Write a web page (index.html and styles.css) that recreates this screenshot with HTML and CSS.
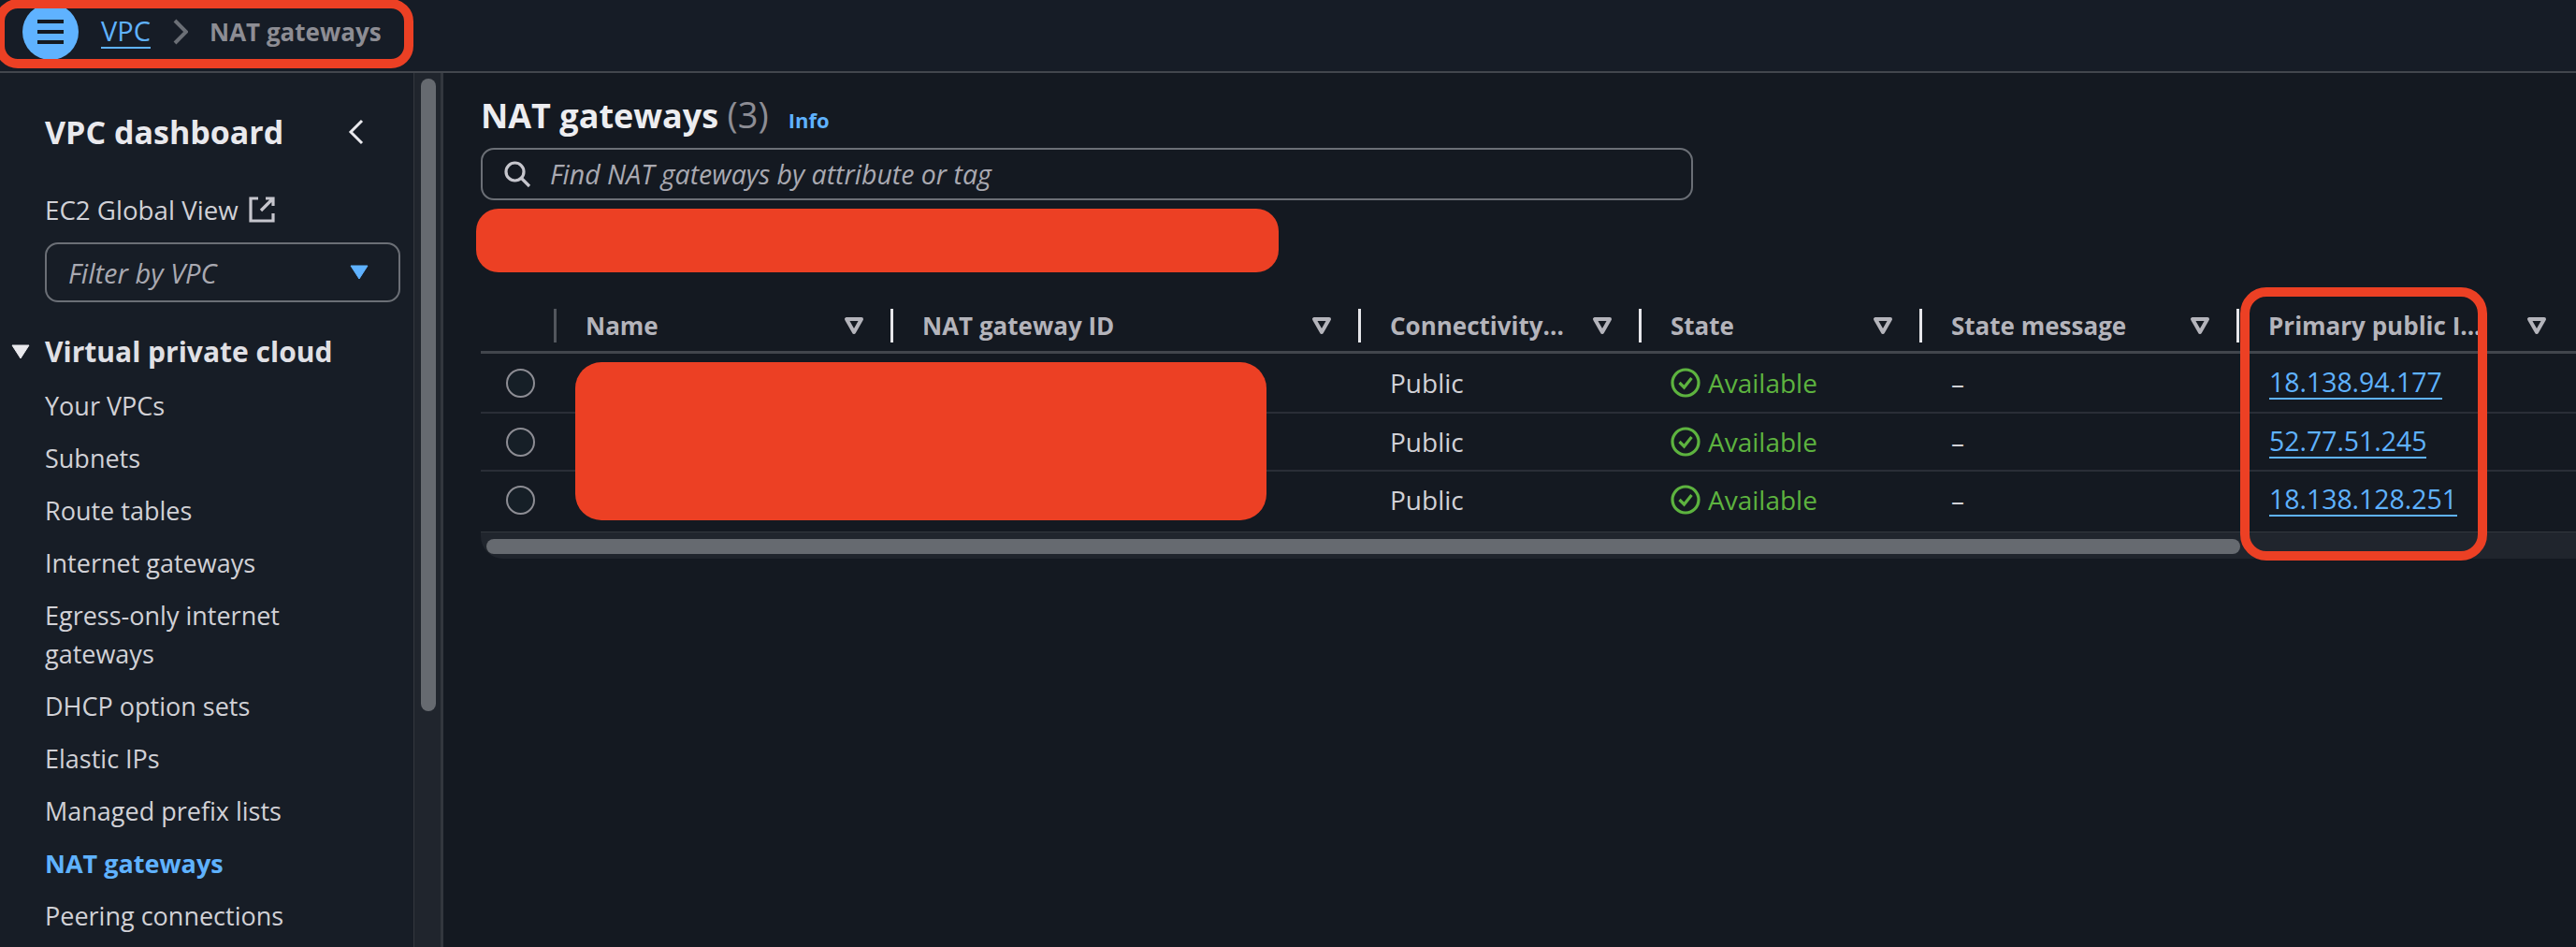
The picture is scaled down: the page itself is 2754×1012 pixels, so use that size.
FILE: index.html
```html
<!DOCTYPE html>
<html>
  <head>
    <title>NAT gateways | VPC Console</title>
    <link rel="stylesheet" href="styles.css">
  </head>
  <body>
    <header class="topbar">
      <button class="menu-btn">
        <svg width="28" height="26" viewBox="0 0 28 26"><path d="M0 2h28M0 13h28M0 24h28" stroke="#141921" stroke-width="4"/></svg>
      </button>
      <a class="crumb-link">VPC</a>
      <svg class="crumb-sep" width="16" height="28" viewBox="0 0 16 28"><path d="M2 2l12 12L2 26" fill="none" stroke="#6b6f76" stroke-width="4"/></svg>
      <span class="crumb-current">NAT gateways</span>
      <div class="mark-crumbs"></div>
    </header>

    <div class="layout">
      <aside class="sidebar">
        <div class="side-title">
          <span>VPC dashboard</span>
          <svg width="18" height="28" viewBox="0 0 18 28"><path d="M15 2L3 14l12 12" fill="none" stroke="#e9e9ed" stroke-width="3"/></svg>
        </div>
        <div class="side-link">
          EC2 Global View
          <svg width="28" height="28" viewBox="0 0 28 28"><path d="M10 2H2v24h24v-8M26 10V2h-8M26 2L13 15" fill="none" stroke="#c6c6cd" stroke-width="3.2"/></svg>
        </div>
        <div class="vpc-filter">
          <span>Filter by VPC</span>
          <svg width="20" height="16" viewBox="0 0 20 16"><path d="M1 1h18L10 15z" fill="#5fb2ff" stroke="#5fb2ff" stroke-linejoin="round"/></svg>
        </div>
        <div class="side-group">
          <svg width="20" height="16" viewBox="0 0 20 16"><path d="M1 1h18L10 15z" fill="#e9e9ed" stroke="#e9e9ed" stroke-linejoin="round"/></svg>
          <span>Virtual private cloud</span>
        </div>
        <ul class="side-nav">
          <li>Your VPCs</li>
          <li>Subnets</li>
          <li>Route tables</li>
          <li>Internet gateways</li>
          <li>Egress-only internet gateways</li>
          <li>DHCP option sets</li>
          <li>Elastic IPs</li>
          <li>Managed prefix lists</li>
          <li class="active">NAT gateways</li>
          <li>Peering connections</li>
        </ul>
      </aside>
      <div class="side-scroll"><div class="side-thumb"></div></div>

      <main class="content">
        <div class="page-title">
          <h1>NAT gateways <span>(3)</span></h1>
          <a class="info">Info</a>
        </div>
        <div class="search">
          <svg width="30" height="30" viewBox="0 0 30 30"><circle cx="12.5" cy="12.5" r="9.5" fill="none" stroke="#c6c6cd" stroke-width="3.2"/><path d="M19.5 19.5L28 28" stroke="#c6c6cd" stroke-width="3.2"/></svg>
          <span>Find NAT gateways by attribute or tag</span>
        </div>
        <div class="redact-pill"></div>

        <div class="table">
          <div class="row head">
            <div class="cell radio-cell"></div>
            <div class="cell first">Name<svg class="sort" width="22" height="20" viewBox="0 0 22 20"><path d="M3 3h16l-8 14z" fill="none" stroke="#b4b4bb" stroke-width="4" stroke-linejoin="round"/></svg></div>
            <div class="cell">NAT gateway ID<svg class="sort" width="22" height="20" viewBox="0 0 22 20"><path d="M3 3h16l-8 14z" fill="none" stroke="#b4b4bb" stroke-width="4" stroke-linejoin="round"/></svg></div>
            <div class="cell">Connectivity...<svg class="sort" width="22" height="20" viewBox="0 0 22 20"><path d="M3 3h16l-8 14z" fill="none" stroke="#b4b4bb" stroke-width="4" stroke-linejoin="round"/></svg></div>
            <div class="cell">State<svg class="sort" width="22" height="20" viewBox="0 0 22 20"><path d="M3 3h16l-8 14z" fill="none" stroke="#b4b4bb" stroke-width="4" stroke-linejoin="round"/></svg></div>
            <div class="cell">State message<svg class="sort" width="22" height="20" viewBox="0 0 22 20"><path d="M3 3h16l-8 14z" fill="none" stroke="#b4b4bb" stroke-width="4" stroke-linejoin="round"/></svg></div>
            <div class="cell">Primary public I...<svg class="sort" width="22" height="20" viewBox="0 0 22 20"><path d="M3 3h16l-8 14z" fill="none" stroke="#b4b4bb" stroke-width="4" stroke-linejoin="round"/></svg></div>
          </div>
          <div class="row top">
            <div class="cell radio-cell"><i class="radio"></i></div>
            <div class="cell"></div>
            <div class="cell"></div>
            <div class="cell">Public</div>
            <div class="cell ok"><svg width="32" height="32" viewBox="0 0 32 32"><circle cx="16" cy="16" r="14" fill="none" stroke="#5db33f" stroke-width="3.2"/><path d="M9.5 16l5 5 8-10" fill="none" stroke="#5db33f" stroke-width="3.2"/></svg>Available</div>
            <div class="cell">–</div>
            <div class="cell"><a class="ip">18.138.94.177</a></div>
          </div>
          <div class="row">
            <div class="cell radio-cell"><i class="radio"></i></div>
            <div class="cell"></div>
            <div class="cell"></div>
            <div class="cell">Public</div>
            <div class="cell ok"><svg width="32" height="32" viewBox="0 0 32 32"><circle cx="16" cy="16" r="14" fill="none" stroke="#5db33f" stroke-width="3.2"/><path d="M9.5 16l5 5 8-10" fill="none" stroke="#5db33f" stroke-width="3.2"/></svg>Available</div>
            <div class="cell">–</div>
            <div class="cell"><a class="ip">52.77.51.245</a></div>
          </div>
          <div class="row last">
            <div class="cell radio-cell"><i class="radio"></i></div>
            <div class="cell"></div>
            <div class="cell"></div>
            <div class="cell">Public</div>
            <div class="cell ok"><svg width="32" height="32" viewBox="0 0 32 32"><circle cx="16" cy="16" r="14" fill="none" stroke="#5db33f" stroke-width="3.2"/><path d="M9.5 16l5 5 8-10" fill="none" stroke="#5db33f" stroke-width="3.2"/></svg>Available</div>
            <div class="cell">–</div>
            <div class="cell"><a class="ip">18.138.128.251</a></div>
          </div>
          <div class="table-scroll"><div class="table-thumb"></div></div>
          <div class="redact-names"></div>
          <div class="mark-column"></div>
        </div>
      </main>
    </div>
  </body>
</html>
```

FILE: styles.css
```css
* {
  box-sizing: border-box;
}

html, body {
  margin: 0;
  height: 1012px;
  overflow: hidden;
}

body {
  background: #141921;
  color: #d1d1d6;
  font-family: "Open Sans", "Noto Sans", sans-serif;
  font-size: 28px;
}

ul {
  list-style: none;
  margin: 0;
  padding: 0;
}

/* top bar */
.topbar {
  position: relative;
  display: flex;
  align-items: center;
  height: 78px;
  padding: 0 0 8px 24px;
  background: #161c26;
  border-bottom: 2px solid #42464d;
}

.menu-btn {
  display: flex;
  align-items: center;
  justify-content: center;
  width: 60px;
  height: 60px;
  padding: 0;
  border: 0;
  border-radius: 50%;
  background: #5fb2ff;
}

.crumb-link {
  margin-left: 24px;
  color: #5fb2ff;
  border-bottom: 2px solid #5fb2ff;
  font-size: 29px;
  line-height: 34px;
}

.crumb-sep {
  margin: 0 23px 0 24px;
}

.crumb-current {
  color: #8d8d94;
  font-size: 26px;
  font-weight: 700;
}

.mark-crumbs {
  position: absolute;
  left: -5px;
  top: -1px;
  width: 447px;
  height: 74px;
  border: 10px solid #ec4024;
  border-radius: 24px;
}

/* side navigation */
.layout {
  display: flex;
  height: 934px;
}

.sidebar {
  width: 442px;
  padding: 42px 14px 0 48px;
  background: #171d26;
  font-size: 27px;
  overflow: hidden;
}

.side-title {
  display: flex;
  justify-content: space-between;
  align-items: center;
  padding-right: 38px;
  color: #e9e9ed;
  font-size: 34px;
  font-weight: 700;
  line-height: 42px;
}

.side-link {
  display: flex;
  align-items: center;
  gap: 11px;
  margin-top: 42px;
  font-size: 27.7px;
  line-height: 40px;
}

.vpc-filter {
  display: flex;
  justify-content: space-between;
  align-items: center;
  width: 380px;
  height: 64px;
  margin-top: 15px;
  padding: 0 32px 0 23px;
  border: 2px solid #6b6f76;
  border-radius: 14px;
  color: #a9a9b1;
  font-size: 29px;
  font-style: italic;
}

.side-group {
  display: flex;
  align-items: center;
  gap: 16px;
  margin: 33px 0 0 -36px;
  color: #e0e0e5;
  font-size: 30px;
  font-weight: 700;
  line-height: 40px;
}

.side-nav {
  margin-top: 17px;
}

.side-nav li {
  width: 340px;
  margin-bottom: 15px;
  line-height: 41px;
}

.side-nav .active {
  color: #5fb2ff;
  font-weight: 700;
}

.side-scroll {
  width: 32px;
  padding: 6px 0 0 7px;
  background: #20252d;
  border-left: 1px solid #33373e;
  border-right: 3px solid #33373e;
}

.side-thumb {
  width: 16px;
  height: 676px;
  border-radius: 8px;
  background: #666a70;
}

/* main column */
.content {
  position: relative;
  flex: 1;
  padding: 24px 0 0 40px;
  background: #141921;
}

.page-title {
  display: flex;
  align-items: baseline;
  gap: 21px;
  height: 44px;
}

h1 {
  margin: 0;
  color: #ededf0;
  font-size: 36px;
  font-weight: 700;
  line-height: 44px;
}

h1 span {
  color: #8d8d94;
  font-size: 38px;
  font-weight: 400;
  line-height: 1;
}

.info {
  color: #5fb2ff;
  font-size: 22px;
  font-weight: 700;
}

.search {
  display: flex;
  align-items: center;
  gap: 20px;
  width: 1296px;
  height: 56px;
  margin-top: 12px;
  padding-left: 22px;
  border: 2px solid #6b6f76;
  border-radius: 14px;
  color: #a9a9b1;
  font-size: 28.5px;
  font-style: italic;
}

.redact-pill {
  width: 858px;
  height: 68px;
  margin: 9px 0 0 -5px;
  border-radius: 24px;
  background: #ec4024;
}

/* table */
.table {
  position: relative;
  margin-top: 39px;
}

.row {
  display: grid;
  grid-template-columns: 78px 360px 500px 300px 300px 339px 360px;
  height: 62px;
  align-items: center;
  border-bottom: 2px solid #2a2e37;
}

.row.top {
  height: 64px;
}

.row.last {
  height: 64px;
  padding-bottom: 4px;
  border-bottom: 0;
}

.row.head {
  height: 48px;
  align-items: start;
  border-bottom: 3px solid #42464d;
  color: #b4b4bb;
  font-size: 26px;
  font-weight: 700;
}

.cell {
  display: flex;
  align-items: center;
  padding-left: 34px;
  white-space: nowrap;
}

.head .cell {
  height: 36px;
  justify-content: space-between;
  padding-left: 31px;
  padding-right: 28px;
  border-left: 3px solid #e6e6ea;
  line-height: 36px;
}

.head .radio-cell {
  border: 0;
}

.head .first {
  border-left-color: #52565d;
}

.cell.radio-cell {
  padding-left: 27px;
}

.radio {
  display: block;
  width: 31px;
  height: 31px;
  border: 2px solid #8d8d94;
  border-radius: 50%;
  background: #161f27;
}

.ok {
  gap: 8px;
  color: #5db33f;
}

.ip {
  margin-left: 1px;
  color: #5fb2ff;
  border-bottom: 2px solid #5fb2ff;
  font-size: 28.4px;
  line-height: 34px;
}

.table-scroll {
  height: 29px;
  padding-top: 7px;
  background: #20252d;
  border-top: 1px solid #33373e;
  border-bottom-left-radius: 24px;
}

.table-thumb {
  width: 1875px;
  height: 16px;
  margin-left: 6px;
  border-radius: 8px;
  background: #666a70;
}

.redact-names {
  position: absolute;
  left: 101px;
  top: 57px;
  width: 739px;
  height: 169px;
  border-radius: 28px;
  background: #ec4024;
}

.mark-column {
  position: absolute;
  left: 1881px;
  top: -23px;
  width: 264px;
  height: 292px;
  border: 10px solid #ec4024;
  border-radius: 28px;
}
```
